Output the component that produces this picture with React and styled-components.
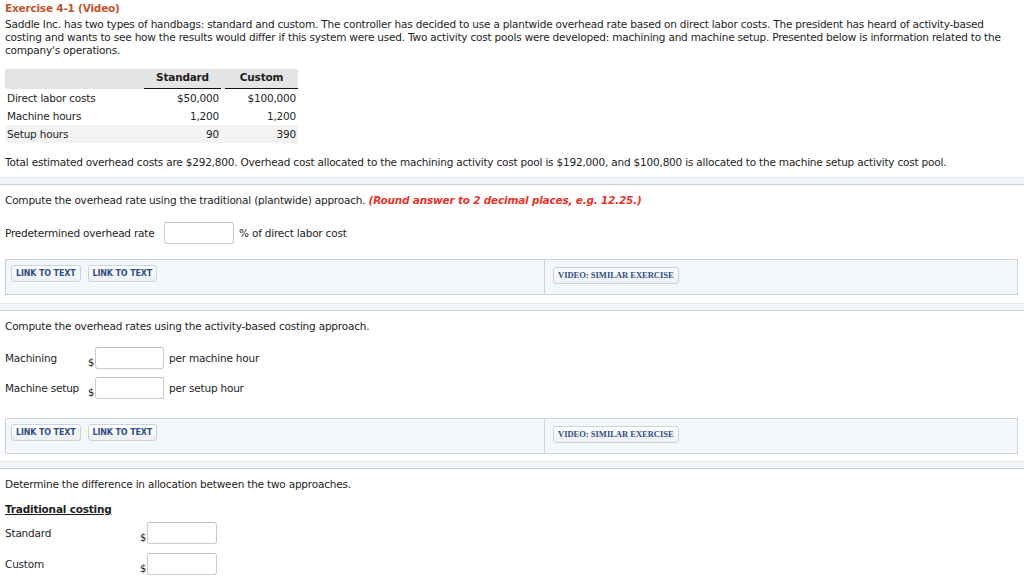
import React from "react";
import styled, { createGlobalStyle } from "styled-components";

const GlobalStyle = createGlobalStyle`
  body {
    margin: 0;
    background: #ffffff;
    font-family: "DejaVu Sans", Verdana, sans-serif;
    font-size: 10.5px;
    letter-spacing: -0.2px;
    line-height: 13px;
    color: #1e1e1e;
  }
`;

const Page = styled.div`
  padding-top: 2px;
  width: 1024px;
`;

const Section = styled.div`
  padding: 0 5px;
`;

const Title = styled.div`
  color: #c2532a;
  font-weight: bold;
`;

const Para = styled.p`
  margin: 3px 0 0;
  white-space: nowrap;
`;

const DataTable = styled.div`
  width: 293px;
  margin-top: 12px;
`;

const TRow = styled.div`
  display: grid;
  grid-template-columns: 139px 77px 77px;
  height: ${(p) => (p.head ? "20px" : "18px")};
  align-items: center;
  background: ${(p) => (p.head ? "#e4e4e4" : p.shade ? "#f3f3f3" : "transparent")};
`;

const Label = styled.div`
  padding-left: 2px;
`;

const HeadCell = styled.div`
  height: 19px;
  line-height: 17px;
  font-weight: bold;
  text-align: center;
  border-bottom: 1px solid #111;
  margin-left: ${(p) => (p.inset ? "4px" : "0")};
  align-self: start;
`;

const Num = styled.div`
  text-align: right;
  padding-right: 2px;
`;

const Note = styled.p`
  margin: 13px 0 0;
  white-space: nowrap;
`;

const Band = styled.div`
  height: 6px;
  margin-top: ${(p) => p.top}px;
  background: #f3f6f9;
  border-top: 1px solid #e2e6eb;
  border-bottom: 1px solid #c9cfd8;
`;

const Prompt = styled.p`
  margin: 9px 0 0;
`;

const Hint = styled.span`
  color: #e8332a;
  font-weight: bold;
  font-style: italic;
`;

const FieldRow = styled.div`
  display: grid;
  grid-template-columns: ${(p) => p.cols};
  align-items: center;
  height: 22px;
  margin-top: ${(p) => p.top}px;
  white-space: nowrap;
`;

const Dollar = styled.span`
  align-self: end;
  font-size: 10px;
  line-height: 12px;
`;

const Input = styled.input`
  box-sizing: border-box;
  width: ${(p) => p.w || 69}px;
  height: 22px;
  margin: 0;
  border: 1px solid #cbcbcb;
  border-top-color: #bdbdbd;
  border-radius: 3px;
  background: #fff;
  outline: none;
`;

const Unit = styled.span`
  padding-left: ${(p) => p.pad}px;
`;

const LinkBar = styled.div`
  display: grid;
  grid-template-columns: 538px 1fr;
  height: 34px;
  margin: ${(p) => p.top}px 6px 0 5px;
  background: #f4f7fa;
  border: 1px solid #cdd3dc;
`;

const LeftCell = styled.div`
  display: flex;
  gap: 7px;
  align-items: flex-start;
  padding: 5px 0 0 5px;
`;

const RightCell = styled.div`
  border-left: 1px solid #cdd3dc;
  padding: 7px 0 0 8px;
`;

const Btn = styled.button`
  box-sizing: border-box;
  height: 17px;
  padding: 0 4px;
  border: 1px solid #cbd2db;
  border-radius: 3px;
  background: linear-gradient(#ffffff, #edf0f4);
  color: #2e4f86;
  font-family: ${(p) =>
    p.video ? '"Liberation Serif", "Times New Roman", serif' : '"DejaVu Sans", Verdana, sans-serif'};
  font-size: ${(p) => (p.video ? "8.5px" : "8px")};
  font-weight: bold;
  line-height: 15px;
  letter-spacing: ${(p) => (p.video ? "0" : "-0.15px")};
  cursor: pointer;
`;

const SubHead = styled.p`
  margin: 12px 0 0;
  font-weight: bold;
  text-decoration: underline;
`;

const LinkButtons = ({ top }) => (
  <LinkBar top={top}>
    <LeftCell>
      <Btn>LINK TO TEXT</Btn>
      <Btn>LINK TO TEXT</Btn>
    </LeftCell>
    <RightCell>
      <Btn video>VIDEO: SIMILAR EXERCISE</Btn>
    </RightCell>
  </LinkBar>
);

const rows = [
  { label: "Direct labor costs", std: "$50,000", custom: "$100,000" },
  { label: "Machine hours", std: "1,200", custom: "1,200" },
  { label: "Setup hours", std: "90", custom: "390", shade: true },
];

export default function App() {
  return (
    <Page>
      <GlobalStyle />
      <Section>
        <Title>Exercise 4-1 (Video)</Title>
        <Para>
          Saddle Inc. has two types of handbags: standard and custom. The controller has decided to use a
          plantwide overhead rate based on direct labor costs. The president has heard of activity-based
          <br />
          costing and wants to see how the results would differ if this system were used. Two activity cost
          pools were developed: machining and machine setup. Presented below is information related to the
          <br />
          company's operations.
        </Para>
        <DataTable>
          <TRow head>
            <div />
            <HeadCell>Standard</HeadCell>
            <HeadCell inset>Custom</HeadCell>
          </TRow>
          {rows.map((r) => (
            <TRow key={r.label} shade={r.shade}>
              <Label>{r.label}</Label>
              <Num>{r.std}</Num>
              <Num>{r.custom}</Num>
            </TRow>
          ))}
        </DataTable>
        <Note>
          Total estimated overhead costs are $292,800. Overhead cost allocated to the machining activity cost
          pool is $192,000, and $100,800 is allocated to the machine setup activity cost pool.
        </Note>
      </Section>

      <Band top={8} />
      <Section>
        <Prompt>
          Compute the overhead rate using the traditional (plantwide) approach.{" "}
          <Hint>(Round answer to 2 decimal places, e.g. 12.25.)</Hint>
        </Prompt>
        <FieldRow cols="159px 70px auto" top={15}>
          <span>Predetermined overhead rate</span>
          <Input w={70} />
          <Unit pad={5}>% of direct labor cost</Unit>
        </FieldRow>
      </Section>
      <LinkButtons top={15} />

      <Band top={8} />
      <Section>
        <Prompt>Compute the overhead rates using the activity-based costing approach.</Prompt>
        <FieldRow cols="83px 7px 69px auto" top={14}>
          <span>Machining</span>
          <Dollar>$</Dollar>
          <Input />
          <Unit pad={5}>per machine hour</Unit>
        </FieldRow>
        <FieldRow cols="83px 7px 69px auto" top={8}>
          <span>Machine setup</span>
          <Dollar>$</Dollar>
          <Input />
          <Unit pad={5}>per setup hour</Unit>
        </FieldRow>
      </Section>
      <LinkButtons top={19} />

      <Band top={7} />
      <Section>
        <Prompt>Determine the difference in allocation between the two approaches.</Prompt>
        <SubHead>Traditional costing</SubHead>
        <FieldRow cols="135px 7px 70px" top={6}>
          <span>Standard</span>
          <Dollar>$</Dollar>
          <Input w={70} />
        </FieldRow>
        <FieldRow cols="135px 7px 70px" top={9}>
          <span>Custom</span>
          <Dollar>$</Dollar>
          <Input w={70} />
        </FieldRow>
      </Section>
    </Page>
  );
}
